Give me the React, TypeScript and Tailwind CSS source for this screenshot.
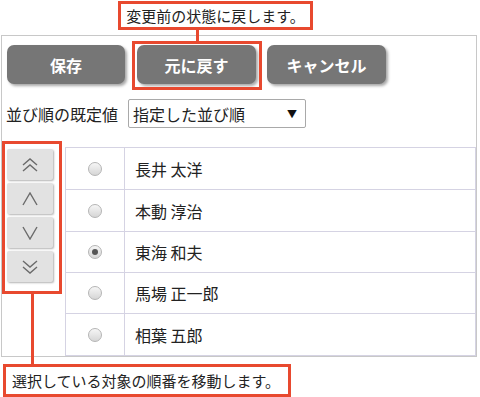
import React from "react";

const RED = "border-[#e8492f]";

function Chevron({ dir, double }: { dir: "up" | "down"; double?: boolean }) {
  const pts = double
    ? dir === "up"
      ? ["1,7 8,1 15,7", "1,13 8,7 15,13"]
      : ["1,1 8,7 15,1", "1,7 8,13 15,7"]
    : dir === "up"
    ? ["1,13 8,1 15,13"]
    : ["1,1 8,13 15,1"];
  return (
    <svg width="16" height="14" viewBox="0 0 16 14" fill="none">
      {pts.map((p, i) => (
        <polyline key={i} points={p} stroke="#6b6b6b" strokeWidth="1.4" strokeLinejoin="miter" />
      ))}
    </svg>
  );
}

function Radio({ checked }: { checked?: boolean }) {
  return (
    <div className="w-[14px] h-[14px] rounded-full border border-[#b5b5b5] bg-gradient-to-b from-[#f6f6f6] to-[#d6d6d6] flex items-center justify-center">
      {checked && <div className="w-[6px] h-[6px] rounded-full bg-[#555]" />}
    </div>
  );
}

const rows = [
  { name: "長井 太洋", h: "h-[42px]" },
  { name: "本動 淳治", h: "h-[42px]" },
  { name: "東海 和夫", h: "h-[41px]", checked: true },
  { name: "馬場 正一郎", h: "h-[41px]" },
  { name: "相葉 五郎", h: "h-[42px]" },
];

export default function App() {
  return (
    <div
      className="relative w-[480px] h-[397px] bg-white overflow-hidden text-[#222]"
      style={{ fontFamily: '"Noto Sans CJK JP", "Noto Sans", sans-serif' }}
    >
      <div className="ml-[1px] mt-[35px] w-[476px] h-[322px] border border-[#c8c8c8] flex flex-col">
        <div className="flex ml-[5px] mt-[9px]">
          <button className="w-[118px] h-[39px] rounded-[7px] bg-[#767676] text-white font-bold text-[16px] shadow-[2px_2px_3px_rgba(0,0,0,0.35)]">
            保存
          </button>
          <button className="ml-[12px] w-[119px] h-[39px] rounded-[7px] bg-[#767676] text-white font-bold text-[16px] shadow-[2px_2px_3px_rgba(0,0,0,0.35)]">
            元に戻す
          </button>
          <button className="ml-[11px] w-[119px] h-[39px] rounded-[7px] bg-[#767676] text-white font-bold text-[16px] shadow-[2px_2px_3px_rgba(0,0,0,0.35)]">
            キャンセル
          </button>
        </div>
        <div className="flex items-center mt-[15px] ml-[4px]">
          <span className="text-[16px] leading-none w-[122px]">並び順の既定値</span>
          <div className="w-[178px] h-[29px] border border-[#a9a9a9] rounded-[2px] flex items-center pl-[4px] pr-[8px]">
            <span className="text-[16px] leading-none flex-1">指定した並び順</span>
            <span className="text-[10px] leading-none text-[#111]">▼</span>
          </div>
        </div>
        <div className="flex mt-[19px] flex-1">
          <div className="ml-[5px] pt-[2px] flex flex-col gap-[3px]">
            <div className="w-[46px] h-[31px] bg-[#e2e2e2] rounded-[2px] shadow-[1px_1px_2px_rgba(0,0,0,0.3)] flex items-center justify-center">
              <Chevron dir="up" double />
            </div>
            <div className="w-[46px] h-[31px] bg-[#e2e2e2] rounded-[2px] shadow-[1px_1px_2px_rgba(0,0,0,0.3)] flex items-center justify-center">
              <Chevron dir="up" />
            </div>
            <div className="w-[46px] h-[31px] bg-[#e2e2e2] rounded-[2px] shadow-[1px_1px_2px_rgba(0,0,0,0.3)] flex items-center justify-center">
              <Chevron dir="down" />
            </div>
            <div className="w-[46px] h-[31px] bg-[#e2e2e2] rounded-[2px] shadow-[1px_1px_2px_rgba(0,0,0,0.3)] flex items-center justify-center">
              <Chevron dir="down" double />
            </div>
          </div>
          <div className="ml-[12px] flex-1 border-l border-t border-r border-[#d5d3e3] self-stretch">
            {rows.map((r) => (
              <div key={r.name} className={`flex ${r.h} border-b border-[#d5d3e3]`}>
                <div className="w-[59px] border-r border-[#d5d3e3] flex items-center justify-center">
                  <Radio checked={r.checked} />
                </div>
                <div className="flex items-center pl-[10px] text-[16px] leading-none">{r.name}</div>
              </div>
            ))}
          </div>
        </div>
      </div>

      {/* top callout */}
      <div className={`absolute left-[118px] top-[1px] w-[195px] h-[29px] border-[3px] ${RED} bg-white flex items-center justify-center text-[15px] leading-none`}>
        変更前の状態に戻します。
      </div>
      <div className="absolute left-[196px] top-[29px] w-[3px] h-[13px] bg-[#e8492f]" />
      <div className={`absolute left-[132px] top-[41px] w-[130px] h-[49px] border-[3px] ${RED}`} />

      {/* left callout */}
      <div className={`absolute left-[2px] top-[141px] w-[60px] h-[153px] border-[3px] ${RED}`} />
      <div className="absolute left-[31px] top-[293px] w-[3px] h-[72px] bg-[#e8492f]" />
      <div className={`absolute left-[3px] top-[364px] w-[288px] h-[33px] border-[3px] ${RED} bg-white flex items-center pl-[6px] text-[15px] leading-none`}>
        選択している対象の順番を移動します。
      </div>
    </div>
  );
}
